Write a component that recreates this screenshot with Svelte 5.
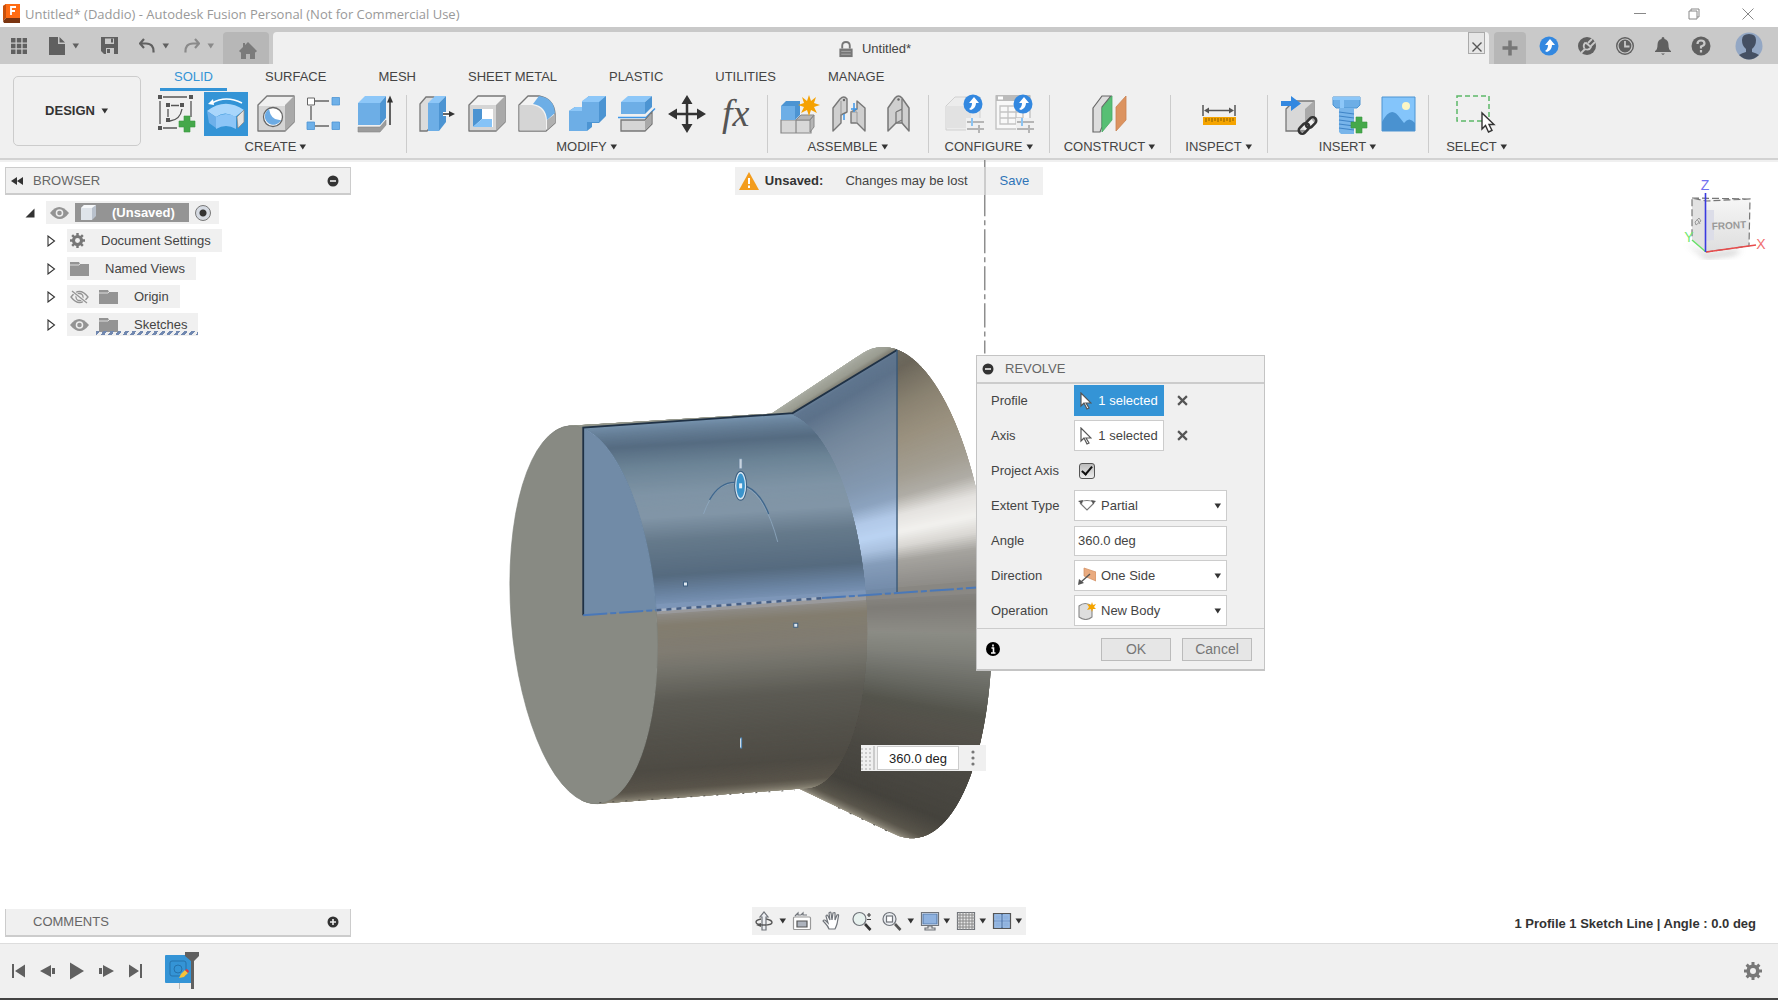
<script>
  const tabs = ['SOLID', 'SURFACE', 'MESH', 'SHEET METAL', 'PLASTIC', 'UTILITIES', 'MANAGE'];
  const groups = [
    { label: 'CREATE', size: 'fit', tools: ['sketch', 'revolve', 'hole', 'pattern', 'extrude'] },
    { label: 'MODIFY', size: 'fit', tools: ['presspull', 'shell', 'fillet', 'combine', 'split', 'move', 'fx'] },
    { label: 'ASSEMBLE', size: 'fit', tools: ['component', 'joint', 'asbuilt'] },
    { label: 'CONFIGURE', size: 'wide', tools: ['configure', 'table'] },
    { label: 'CONSTRUCT', size: 'wide', tools: ['plane'] },
    { label: 'INSPECT', size: 'narrow', tools: ['measure'] },
    { label: 'INSERT', size: 'fit', tools: ['insert', 'fastener', 'canvas'] },
    { label: 'SELECT', size: 'narrow', tools: ['select'] }
  ];
  const tree = [
    { label: 'Document Settings', icons: ['gear'] },
    { label: 'Named Views', icons: ['folder'] },
    { label: 'Origin', icons: ['eyeoff', 'folder'] },
    { label: 'Sketches', icons: ['eye', 'folder'], hatched: true }
  ];
  const navTools = [
    { name: 'orbit', menu: true },
    { name: 'lookat' },
    { name: 'pan' },
    { name: 'zoom' },
    { name: 'fit', menu: true },
    { name: 'display', menu: true },
    { name: 'grid', menu: true },
    { name: 'layout', menu: true }
  ];
  const playback = ['first', 'back', 'play', 'forward', 'last'];

  let angle = $state('360.0 deg');
  let projectAxis = $state(true);

  // Solid of revolution: three tilted rings joined by shaded strips.
  const ring = (cx, cy, rx, ry, tilt) => ({ cx, cy, rx, ry, a: (tilt * Math.PI) / 180 });
  const front = ring(584.5, 615.6, 72.5, 189, -4.3);
  const neck = ring(793.5, 601.5, 72.5, 187.5, -4.3);
  const rim = ring(897.5, 593.5, 93, 245.5, -3.9);

  const cylinderRamp = [
    [-110, 'd0d1c8'], [-92, '9a9c90'], [-79, '8e9289'], [-60, '615d4d'], [-48, '83826d'], [-37, '9d9781'],
    [-29, 'a09983'], [-21, '78715b'], [-10, '615b4a'], [-4, '81827f'], [0, '9c9c9e'], [2, '8c8983'],
    [5, '837d6f'], [13, '807c72'], [18, '76756d'], [29, '5c5b54'], [42, '54524b'], [58, '4e4b44'],
    [72, '5a554b'], [85, '8c8778'], [110, 'b0ab9c']
  ];
  const coneRamp = [
    [-102, 'b0b3aa'], [-85, '9b9d92'], [-78, '6f6b60'], [-70, '6b665a'], [-55, '8a8271'], [-44, '9a917f'],
    [-33, 'a39e92'], [-27, 'b0ada6'], [-22, 'e4e2df'], [-17, 'f2f1ee'], [-13, 'd9d7d3'], [-9, 'a5a39e'],
    [-4, '95938f'], [4, '7e7c77'], [11, '8c8c85'], [17, '7f807a'], [27, '62635c'], [32, '54544c'],
    [38, '54514a'], [50, '4b4943'], [70, '45433d'], [85, '5a564c'], [100, 'a09b8c'], [120, 'a09b8c']
  ];

  function at(r, deg) {
    const t = (deg * Math.PI) / 180;
    const x = r.rx * Math.cos(t);
    const y = r.ry * Math.sin(t);
    return [
      (r.cx + x * Math.cos(r.a) - y * Math.sin(r.a)).toFixed(2),
      (r.cy + x * Math.sin(r.a) + y * Math.cos(r.a)).toFixed(2)
    ].join(',');
  }
  function shade(ramp, deg) {
    let i = 1;
    while (i < ramp.length - 1 && ramp[i][0] < deg) i++;
    const [d0, c0] = ramp[i - 1];
    const [d1, c1] = ramp[i];
    const k = Math.min(1, Math.max(0, (deg - d0) / (d1 - d0)));
    const ch = [0, 2, 4].map((o) => {
      const a = parseInt(c0.slice(o, o + 2), 16);
      const b = parseInt(c1.slice(o, o + 2), 16);
      return Math.round(a + (b - a) * k);
    });
    return `rgb(${ch.join(',')})`;
  }
  // Strips are painted from the silhouettes inward; each one runs on under the
  // next three, so no seam shows between neighbours.
  function strips(from, to, ramp, limit) {
    const out = [];
    const step = 0.5;
    for (let d = limit; d > 0; d -= step) {
      for (const side of [-1, 1]) {
        const steps = [0, 1, 2, 3, 4].map((n) => side * (d - n * step));
        out.push({
          points: [...steps.map((s) => at(from, s)), ...steps.reverse().map((s) => at(to, s))].join(' '),
          color: shade(ramp, side * (d - step / 2))
        });
      }
    }
    return out;
  }
  const surfaces = [...strips(neck, rim, coneRamp, 112), ...strips(front, neck, cylinderRamp, 104)];
</script>

{#snippet caret()}
  <svg class="caret" viewBox="0 0 8 6" width="8" height="6" aria-hidden="true"><path d="M0.5 0.5h6.5L3.8 5.6z" fill="currentColor" /></svg>
{/snippet}

{#snippet upBadge(x, y)}
  <circle cx={x} cy={y} r="9.5" fill="#3388e0" />
  <path d="M{x + 1} {y - 7}l5 6h-3q0 5-5 7l-2-1q3-2 3-6h-3z" fill="#fff" />
{/snippet}

{#snippet sliders(x, y)}
  <path d="M{x} {y}h17M{x} {y + 7}h17M{x + 12} {y + 3}v8" stroke="#b5b5b5" stroke-width="2" fill="none" />
  <path d="M{x + 5} {y - 4}v8" stroke="#8cc4f2" stroke-width="2" />
{/snippet}

{#snippet plus(x, y)}
  <path d="M{x - 8} {y - 3}h5v-5h6v5h5v6h-5v5h-6v-5h-5z" fill="#45a84a" stroke="#3a9940" stroke-width=".6" />
{/snippet}

{#snippet tool(name)}
  <svg viewBox="0 0 44 44" width="44" height="44" aria-hidden="true">
    {#if name === 'sketch'}
      <g stroke="#555" stroke-width="1.3" fill="none">
        <path d="M6 9v23M9 5h24M37 9v16M9 36h14" />
        <path d="M14 17v8M17 13.500h8M28 17q-2 11-12 12" />
      </g>
      <path d="M4 3h4v4H4zM35 3h4v4h-4zM4 34h4v4H4zM12 11h4v4h-4zM26 11h4v4h-4zM12 26h4v4h-4z" fill="#555" />
      {@render plus(33, 32)}
    {:else if name === 'revolve'}
      <path d="M3 19Q21 5 40 18l-9 7Q21 18 12 25z" fill="#a9d6fb" />
      <path d="M3 19l9 6v11L5 31z" fill="#6db0ea" />
      <path d="M12 25q10-6 20 0v12q-10-6-20 0z" fill="#8cc5f7" />
      <path d="M33 25l7-7v12l-6 6z" fill="#e4e2df" stroke="#8b8b8b" stroke-width=".8" />
      <path d="M8 11Q22 3 38 11" fill="none" stroke="#fff" stroke-width="1.500" />
      <path d="M4 12l5-5 1 6z" fill="#fff" />
    {:else if name === 'hole'}
      <path d="M4 13l9-9h27v26l-9 9H4z" fill="#f0f0f0" stroke="#777" stroke-width="1.400" stroke-linejoin="round" />
      <path d="M31 13l9-9v26l-9 9z" fill="#a9a9a9" />
      <path d="M5 14h26v24H5z" fill="#d5d5d5" />
      <circle cx="19" cy="25" r="9.500" fill="#fff" stroke="#666" stroke-width="1.300" />
      <path d="M15 17a8.500 8.500 0 1 0 12 11Q17 29 15 17z" fill="#6cabe4" />
    {:else if name === 'pattern'}
      <path d="M11 9h14M7 14v14M11 34h14" stroke="#666" stroke-width="1.400" />
      <path d="M3.500 6h7v7h-7z" fill="#fff" stroke="#666" />
      <path d="M28 5.500h7.500V13H28zM3 30h7.500v7.500H3zM28 30h7.500v7.500H28z" fill="#6eb0e8" stroke="#4c94d4" stroke-width=".8" />
    {:else if name === 'extrude'}
      <path d="M4 11l7-7h21l-6 7z" fill="#8dc7f8" />
      <path d="M26 11l6-7v22l-6 7z" fill="#4c94d2" />
      <path d="M4 11h22v22H4z" fill="#6daee6" />
      <path d="M4 35h22l6-7v5l-6 7H4z" fill="#9c9c9c" stroke="#888" stroke-width=".6" />
      <path d="M36 33V9" stroke="#333" stroke-width="1.500" />
      <path d="M36 3.500l3 7h-6z" fill="#333" />
    {:else if name === 'presspull'}
      <path d="M5 12l6-7h8v26l-7 8H5z" fill="#dcdcdc" stroke="#777" stroke-width="1.300" />
      <path d="M13 11l7-7h11l-7 7z" fill="#8dc7f8" />
      <path d="M13 11h11v28H13z" fill="#6daee6" />
      <path d="M24 11l7-7v26l-7 9z" fill="#4c94d2" />
      <path d="M28 22h9" stroke="#fff" stroke-width="4" /><path d="M28 22h7" stroke="#333" stroke-width="1.500" /><path d="M34 19l6 3-6 3z" fill="#333" />
    {:else if name === 'shell'}
      <path d="M4 13l9-9h27v26l-9 9H4z" fill="#f3f3f3" stroke="#777" stroke-width="1.400" stroke-linejoin="round" />
      <path d="M31 13l9-9v26l-9 9z" fill="#a9a9a9" /><path d="M5 13h26v25H5z" fill="#d5d5d5" />
      <path d="M8 17h20v18H8z" fill="#fff" /><path d="M8 17h9v10l-9 8z" fill="#4c94d2" /><path d="M17 27h10v8H8z" fill="#85c3f7" />
    {:else if name === 'fillet'}
      <path d="M4 13l9-9h11q15 3 16 18v9l-9 8H4z" fill="#f3f3f3" stroke="#777" stroke-width="1.400" stroke-linejoin="round" />
      <path d="M4.500 13H17q13 2 14 16v9.500H4.500z" fill="#d5d5d5" /><path d="M32 28l8-6v9l-8 7z" fill="#b0b0b0" />
      <path d="M24 4q15 2 16 17l-8 7q-1-14-14-16z" fill="#6daee6" />
    {:else if name === 'combine'}
      <path d="M4 19l6-4h7v-5l7-6h17v20l-7 7h-7v4l-5 4H4z" fill="#4c94d2" />
      <path d="M4 19h13v-9h17v20h-12v9H4z" fill="#6daee6" /><path d="M17 9l7-5h17l-7 6H17zM4 19l6-4h7v4z" fill="#8dc7f8" />
    {:else if name === 'split'}
      <path d="M6 10l7-6h24l-7 6z" fill="#8dc7f8" /><path d="M6 10h24v12H6z" fill="#6daee6" /><path d="M30 10l7-6v11l-7 7z" fill="#4c94d2" />
      <path d="M3 25.500h28l9-9" stroke="#3f97e8" stroke-width="1.500" fill="none" />
      <path d="M6 28h24l7-8v12l-7 7H6z" fill="#d5d5d5" stroke="#777" stroke-width="1.300" /><path d="M30 29l6-7v10l-6 6z" fill="#a9a9a9" />
    {:else if name === 'move'}
      <path d="M22 8v28M8 22h28" stroke="#333" stroke-width="2.500" />
      <path d="M22 3l5.500 9h-11zM22 41l5.500-9h-11zM3 22l9-5.500v11zM41 22l-9-5.500v11z" fill="#333" />
    {:else if name === 'fx'}
      <text x="7" y="34" class="fx">fx</text>
    {:else if name === 'component'}
      <path d="M5 28h15v13H5zM20 28h15v13H20z" fill="#d8d8d8" stroke="#888" stroke-width="1.200" /><path d="M20 28l5-5h13l-4 5zM34 28l4-5v12l-4 5z" fill="#b5b5b5" stroke="#888" />
      <path d="M5 14l5-5h14v14l-5 5H5z" fill="#4c94d2" /><path d="M5 14h14v14H5z" fill="#6daee6" />
      <path d="M33 3l2 6 5-4-2 6 6 2-6 2 3 6-6-3-2 6-2-6-6 3 3-6-6-2 6-2-2-6 5 4z" fill="#f5a100" />
    {:else if name === 'joint'}
      <path d="M7 16l7-9q4-4 7 0v13l-6 3v8l-8 8z" fill="#cfcfcf" stroke="#777" stroke-width="1.400" stroke-linejoin="round" /><path d="M15 23V9" stroke="#999" /><circle cx="18" cy="8" r="1.200" fill="#666" />
      <path d="M18 22v6" stroke="#3f97e8" stroke-width="1.500" />
      <path d="M25 20l6-3V9l8 7v23l-8-8h-6z" fill="#cfcfcf" stroke="#777" stroke-width="1.400" stroke-linejoin="round" /><path d="M25 20h6v11" stroke="#999" fill="none" /><path d="M28 11v9M25 17h6" stroke="#3f97e8" stroke-width="1.500" />
    {:else if name === 'asbuilt'}
      <path d="M12 16l7-10q3.500-4 7 0l7 10v23l-7-8h-6l-8 8z" fill="#cfcfcf" stroke="#777" stroke-width="1.500" stroke-linejoin="round" /><path d="M20 20l6-3V7M20 20v11l6-3M26 17v14" stroke="#777" stroke-width="1.300" fill="none" /><circle cx="22.500" cy="7.500" r="1.200" fill="#666" />
    {:else if name === 'configure'}
      <path d="M4 14l9-9h25v24l-9 9H4z" fill="#ececec" stroke="#d0d0d0" /><path d="M4 14h25v22H4z" fill="#e2e2e2" />
      {@render upBadge(31, 12)}
      <path d="M24 26h19v17H24z" fill="#f0f0f0" />{@render sliders(25, 30)}
    {:else if name === 'table'}
      <path d="M4 4h34v33H4z" fill="#f8f8f8" stroke="#c5c5c5" stroke-width="1.500" /><path d="M4 3h34v6H4z" fill="#bbb" /><path d="M6 4.500h5v3H6z" fill="#fff" />
      <path d="M8 14h23v18H8zM8 20h23M8 26h23M16 14v18M24 14v18" fill="none" stroke="#c3c3c3" stroke-width="1.300" />
      {@render upBadge(31, 12)}
      <path d="M24 26h19v17H24z" fill="#f0f0f0" />{@render sliders(25, 30)}
    {:else if name === 'plane'}
      <path d="M5 16l9-12h9L14 15v20l-2 5H5z" fill="#ddd" stroke="#666" stroke-width="1.200" />
      <path d="M14 16L24 4v24L14 40z" fill="#57bf74" stroke="#48a964" stroke-width=".8" /><path d="M28 15L38 4v24L28 39z" fill="#dc935f" stroke="#c98250" stroke-width=".8" />
    {:else if name === 'measure'}
      <path d="M6 13v11M38 13v11M10 18.500h24" stroke="#555" stroke-width="1.500" /><path d="M7 18.500l5-3v6zM37 18.500l-5-3v6z" fill="#555" />
      <path d="M6 25h33v8H6z" fill="#f5a400" /><path d="M9 26v4M12 26v3M15 26v4M18 26v3M21 26v4M24 26v3M27 26v4M30 26v3M33 26v4M36 26v3" stroke="#8a5f00" />
    {:else if name === 'insert'}
      <path d="M10 17l8-8h20v22l-9 8H10z" fill="#d8d8d8" stroke="#777" stroke-width="1.300" /><path d="M29 17l9-8v22l-9 8z" fill="#a9a9a9" />
      <path d="M5 9h10V4l10 7.500L15 19v-5H5z" fill="#3388e0" />
      <path d="M28 37l9-8" stroke="#f0f0f0" stroke-width="8" />
      <g fill="none" stroke="#333" stroke-width="2.500"><rect x="22" y="33" width="12" height="7" rx="3.500" transform="rotate(-45 28 36.500)" /><rect x="29" y="27" width="12" height="7" rx="3.500" transform="rotate(-45 35 30.500)" /></g>
    {:else if name === 'fastener'}
      <path d="M7 5h27v8l-3 3H10l-3-3z" fill="#6daee6" stroke="#4c94d2" /><path d="M7 5h27v3H7zM14 5h4v11h-4z" fill="#8dc7f8" />
      <path d="M13 16h15v26H15l-2-2z" fill="#78b5ea" /><path d="M13 20l15 2M13 24l15 2M13 28l15 2M13 32l15 2M13 36l15 2" stroke="#3f84c6" stroke-width="1.200" />
      {@render plus(33, 33)}
    {:else if name === 'canvas'}
      <path d="M6 5h33v34H6z" fill="#84c5fb" stroke="#4c94d2" /><path d="M6 30q9-18 18-4l4 5q5-7 11 0v8H6z" fill="#4a92d0" /><circle cx="30" cy="14" r="4" fill="#fbf6c5" />
    {:else if name === 'select'}
      <rect x="2" y="4" width="32" height="25" fill="none" stroke="#5cb868" stroke-width="1.500" stroke-dasharray="5 3" />
      <path d="M27 21v16l3.500-3.500 3 6.500 3.500-1.500-3-6h5z" fill="#fff" stroke="#333" stroke-width="1.400" />
    {/if}
  </svg>
{/snippet}

{#snippet treeIcon(name)}
  {#if name === 'gear'}
    <svg viewBox="0 0 16 16" width="15" height="15" aria-hidden="true"><circle cx="8" cy="8" r="4.200" fill="none" stroke="currentColor" stroke-width="3.400" /><path d="M8 0v16M0 8h16M2.300 2.300l11.400 11.400M13.700 2.300L2.300 13.700" stroke="currentColor" stroke-width="2.600" /><circle cx="8" cy="8" r="2.600" fill="#f0f0f0" /></svg>
  {:else if name === 'folder'}
    <svg viewBox="0 0 19 16" width="19" height="16" aria-hidden="true"><path d="M0 1h9l1 2h9v12H0z" fill="#949494" /><path d="M0 4h9l1-1" stroke="#ddd" fill="none" /></svg>
  {:else}
    <svg viewBox="0 0 19 14" width="19" height="14" aria-hidden="true">
      {#if name === 'eye'}
        <path d="M0 7q9-12 19 0-9 12-19 0z" fill="#949494" /><circle cx="9.500" cy="7" r="3.800" fill="#eee" /><circle cx="9.500" cy="7" r="2.300" fill="#949494" />
      {:else}
        <path d="M1 7q8.500-11 17 0-8.500 11-17 0z" fill="none" stroke="#949494" stroke-width="1.300" /><circle cx="9.500" cy="7" r="3.500" fill="none" stroke="#949494" stroke-width="1.300" /><path d="M2 1l15 12" stroke="#f0f0f0" stroke-width="3" /><path d="M2 1l15 12" stroke="#949494" stroke-width="1.300" />
      {/if}
    </svg>
  {/if}
{/snippet}

{#snippet nav(name)}
  <svg viewBox="0 0 20 20" width="20" height="20" aria-hidden="true">
    <g fill="none" stroke="#70747a" stroke-width="1.200">
      {#if name === 'orbit'}
        <path d="M12 8q6 1 6 3.500 0 2.500-8 2.500T2 11q0-2 5-3" stroke="#555" stroke-width="1.400" /><path d="M8 19V6H6l4-5 4 5h-2v13z" fill="#eceef2" /><path d="M8 14h4" stroke="#555" stroke-width="1.400" /><path d="M2 14l5 2V12z" fill="#555" stroke="none" />
      {:else if name === 'lookat'}
        <rect x="1.500" y="6" width="17" height="12.500" rx="1" fill="#fff" stroke="#999" /><path d="M5 10h10v6H5z" fill="#adb3bd" stroke="#555" /><path d="M3 5l3-3v2h3l2-2v2h4" />
      {:else if name === 'pan'}
        <path d="M7 18q-1-3-4-6l-2-2q1-2 3 0l2 2-2-7q1-2 2 0l2 4-1-7q2-2 2 0l1 7 1-7q2-1 2 0v7l2-5q2-1 1.500 1L15 13q-1 3-2 5z" fill="#fff" />
      {:else if name === 'zoom'}
        <circle cx="7.500" cy="8" r="6.500" fill="#e7f1ee" /><path d="M13 13l5.500 6" stroke="#333" stroke-width="2.600" /><path d="M15 4h4M17 2v4M15 8.500h4" stroke="#444" />
      {:else if name === 'fit'}
        <circle cx="7.500" cy="8" r="6.500" fill="#e9ecf0" /><rect x="4.500" y="5" width="6" height="6" fill="#fff" /><path d="M13 13l5.500 6" stroke="#555" stroke-width="2.600" />
      {:else if name === 'display'}
        <path d="M1.500 1.500h17v13h-17z" fill="#fff" /><path d="M3 3h14v10H3z" fill="#8fb2df" stroke="#5c80b0" /><path d="M8 15h4v2h3v2H5v-2h3z" fill="#ddd" />
      {:else if name === 'grid'}
        <path d="M1.500 1.500h17v17h-17z" fill="#e8e8e8" /><path d="M4 1v18M7 1v18M10 1v18M13 1v18M16 1v18M1 4h18M1 7h18M1 10h18M1 13h18M1 16h18" stroke="#888" stroke-width="1" />
      {:else}
        <path d="M1.500 2.500h17v15h-17z" fill="#8fb2df" stroke="#555" /><path d="M10 3v14" stroke="#4d6fa0" stroke-width="1.500" /><path d="M2 10h16" stroke="#6f93c6" /><path d="M3 4h6v5H3zM11 4h6v5h-6zM3 11h6v5H3zM11 11h6v5h-6z" stroke="#a6c2e6" stroke-width=".6" />
      {/if}
    </g>
  </svg>
{/snippet}

{#snippet cursor()}
  <svg viewBox="0 0 12 18" width="12" height="18" aria-hidden="true"><path d="M1 1v13l3-3 3 6 2-1-3-5h5z" fill="#fff" stroke="#555" stroke-width="1.200" /></svg>
{/snippet}

{#snippet disc(kind)}
  <svg viewBox="0 0 12 12" width="12" height="12" aria-hidden="true"><circle cx="6" cy="6" r="5.500" fill="#333" /><path d={kind === 'plus' ? 'M3 6h6M6 3v6' : 'M3 6h6'} stroke="#eee" stroke-width="1.600" /></svg>
{/snippet}

<div class="app">
  <header class="titlebar">
    <svg class="logo" viewBox="0 0 17 19" width="17" height="19" aria-hidden="true"><path d="M0 2l3-2h14v14H3z" fill="#ff6b12" /><path d="M0 2l3-2v14l-3 3z" fill="#c8500b" /><path d="M0 17l3-3h14v5H1z" fill="#7a3410" /><path d="M8 11V3h5M8 7h4" stroke="#fff" stroke-width="1.800" fill="none" /></svg>
    <h1>Untitled* (Daddio) - Autodesk Fusion Personal (Not for Commercial Use)</h1>
    <div class="window-buttons">
      <button aria-label="Minimize"><svg viewBox="0 0 12 12" width="12" height="12"><path d="M0 5.500h12" stroke="#888" /></svg></button>
      <button aria-label="Restore"><svg viewBox="0 0 12 12" width="12" height="12"><path d="M1 3h8v8H1zM3 3V1h8v8H9" fill="none" stroke="#888" /></svg></button>
      <button aria-label="Close"><svg viewBox="0 0 12 12" width="12" height="12"><path d="M0.500 0.500l11 11M11.500 0.500l-11 11" stroke="#888" /></svg></button>
    </div>
  </header>

  <div class="quickbar">
    <div class="quick">
      <button aria-label="Data panel"><svg viewBox="0 0 18 18" width="18" height="18"><path d="M1 1h4.500v4.500H1zM6.800 1h4.500v4.500H6.800zM12.600 1H17v4.500h-4.400zM1 6.800h4.500v4.500H1zM6.800 6.800h4.500v4.500H6.800zM12.600 6.800H17v4.500h-4.400zM1 12.600h4.500V17H1zM6.800 12.600h4.500V17H6.800zM12.600 12.600H17V17h-4.400z" fill="currentColor" /></svg></button>
      <button aria-label="File"><svg viewBox="0 0 16 18" width="16" height="18"><path d="M0 0h9v7h7v11H0zM10.500 0L16 5.500h-5.500z" fill="currentColor" /></svg>{@render caret()}</button>
      <button aria-label="Save file"><svg viewBox="0 0 17 17" width="17" height="17"><path d="M0 0h17v17H3l-3-3z" fill="currentColor" /><path d="M4 1.500h9V7H4zM5 11h8v6H5z" fill="#c9c9c9" /><path d="M10 1.500h2v4h-2zM6 12h3v4H6z" fill="currentColor" /></svg></button>
      <button aria-label="Undo"><svg viewBox="0 0 16 16" width="16" height="16"><path d="M5 1L1 5.500 5 10M1 5.500h6q8 0 7.500 9" fill="none" stroke="currentColor" stroke-width="2.200" /></svg>{@render caret()}</button>
      <button aria-label="Redo" class="dim"><svg viewBox="0 0 16 16" width="16" height="16"><path d="M11 1l4 4.500L11 10M15 5.500H9Q1 5.500 1.500 14.500" fill="none" stroke="currentColor" stroke-width="2.200" /></svg>{@render caret()}</button>
    </div>
    <button class="home" aria-label="Home"><svg viewBox="0 0 18 18" width="18" height="18"><path d="M9 1l9 9-1.500 1.500L16 11v7h-5v-5H7v5H2v-7l-.5.500L0 10l4-4V2h2v2z" fill="#7b7b7b" /></svg></button>
    <div class="doc-tab">
      <div class="doc-title">
        <svg viewBox="0 0 16 18" width="16" height="17" aria-hidden="true"><path d="M4 8V5q0-4 4-4t4 4v3" fill="none" stroke="#777" stroke-width="2" /><path d="M1 8h14v9H1z" fill="#777" /><path d="M3 11h10M3 14h10" stroke="#aaa" /></svg>
        <span>Untitled*</span>
      </div>
      <button class="close-tab" aria-label="Close tab"><svg viewBox="0 0 12 12" width="12" height="12"><path d="M1.500 1.500l9 9M10.500 1.500l-9 9" stroke="#555" stroke-width="1.400" /></svg></button>
    </div>
    <button class="new-tab" aria-label="New tab"><svg viewBox="0 0 16 16" width="16" height="16"><path d="M8 0.500v15M0.500 8h15" stroke="#777" stroke-width="3.500" /></svg></button>
    <div class="account">
      <button aria-label="Updates"><svg viewBox="0 0 20 20" width="20" height="20">{@render upBadge(10, 10)}</svg></button>
      <button aria-label="Extensions"><svg viewBox="0 0 20 20" width="20" height="20"><circle cx="10" cy="10" r="9" fill="currentColor" /><path d="M4 17l4-4M7.500 12.500q-2-3 1-6M8 13q4 2 6-2M8.500 6.500l6 5M11 7l4-4M14 10l4-4" stroke="#c9c9c9" stroke-width="1.800" fill="none" /></svg></button>
      <button aria-label="Job status"><svg viewBox="0 0 20 20" width="20" height="20"><circle cx="10" cy="10" r="9" fill="currentColor" /><circle cx="10" cy="10" r="7" fill="none" stroke="#c9c9c9" stroke-width="1.200" /><path d="M10 5v5.500h4.500" fill="none" stroke="#c9c9c9" stroke-width="1.800" /></svg></button>
      <button aria-label="Notifications"><svg viewBox="0 0 20 20" width="20" height="20"><path d="M10 1q1.500 0 1.500 2 4 1 4 6 0 5 2.500 6v1H2v-1q2.500-1 2.500-6 0-5 4-6 0-2 1.500-2zM8 17.500h4L10 19z" fill="currentColor" /></svg></button>
      <button aria-label="Help"><svg viewBox="0 0 20 20" width="20" height="20"><circle cx="10" cy="10" r="9.500" fill="currentColor" /><path d="M6.500 8q0-3.500 3.500-3.500T13.500 7.500q0 2-3.500 3v2M10 14v2.500" fill="none" stroke="#c9c9c9" stroke-width="2.200" /></svg></button>
      <button class="avatar" aria-label="Profile menu"><svg viewBox="0 0 28 28" width="28" height="28"><circle cx="14" cy="14" r="13.500" fill="#93a7c4" /><path d="M4 23q3-2 7-3v-3q-4-3-4-9 0-6 7-6t7 6q0 6-4 9v3q4 1 7 3-10 9-20 0z" fill="#455063" /></svg></button>
    </div>
  </div>

  <div class="ribbon">
    <button class="workspace">DESIGN {@render caret()}</button>
    <div class="ribbon-main">
      <nav class="tabs" aria-label="Workspace tabs">
        {#each tabs as tab, i}
          <button class="tab" class:active={i === 0}>{tab}</button>
        {/each}
      </nav>
      <div class="groups">
        {#each groups as group, i}
          <section class="group {group.size}">
            <div class="tools">
              {#each group.tools as name}
                <button class="tool" class:chosen={name === 'revolve'} aria-label={name}>{@render tool(name)}</button>
              {/each}
            </div>
            <button class="group-label">{group.label} {@render caret()}</button>
          </section>
          {#if i < groups.length - 1}<span class="divider"></span>{/if}
        {/each}
      </div>
    </div>
  </div>

  <main class="viewport">
    <svg class="scene" viewBox="0 162 1778 781" preserveAspectRatio="xMidYMid slice" aria-label="Model preview" role="img">
      <path d="M984.500 162v193" stroke="#8e8e8e" stroke-width="1.500" stroke-dasharray="24 4 5 4" stroke-dashoffset="5" />
      {#each surfaces as s}
        <polygon points={s.points} fill={s.color} />
      {/each}
      <ellipse cx={front.cx} cy={front.cy} rx={front.rx} ry={front.ry} transform="rotate(-4.3 {front.cx} {front.cy})" fill="#888a83" stroke="#7d7f79" stroke-width=".6" />
      <path d="M584 429L793 414.500 897 351.500V594L584 616z" fill="#3c8dfc" fill-opacity=".3" />
      <path d="M584 616V429L793 414.500 897 351.500" fill="none" stroke="#1f3145" stroke-width="1.800" />
      <path d="M897 351.500V594" stroke="#3a5877" stroke-width="1.400" />
      <path d="M584 616L657 611M822 599L984 588" stroke="#4a78b8" stroke-width="2" stroke-dasharray="24 3 6 3" />
      <path d="M657 611L822 599" stroke="#a8b4c6" stroke-width="2.500" /><path d="M657 611L822 599" stroke="#465f86" stroke-width="2.500" stroke-dasharray="5 5" />
      <path d="M600 803L795 790.500M838 808L893 834" stroke="#55534c" stroke-width="1" stroke-dasharray="2 11" />
      <path d="M704 515Q715 484 735 484.500M747 489Q766 498 778 543" fill="none" stroke="#8fa9c1" stroke-width=".8" />
      <path d="M710 501Q720 483.500 735 483.500M747 487.500Q761 494 769 515" fill="none" stroke="#3f678d" stroke-width="1.300" />
      <path d="M739.500 460h3v10h-3z" fill="#c8d3de" stroke="#62809e" stroke-width=".6" />
      <ellipse cx="741" cy="487" rx="5" ry="13" fill="#3a94cc" stroke="#d7e6f2" stroke-width="1.500" /><ellipse cx="741" cy="487" rx="6" ry="14.500" fill="none" stroke="#3c5f80" />
      <path d="M739.500 484.500h3v5h-3z" fill="#e8f2fa" />
      <path d="M684 583h4v4h-4zM794 624h4v4h-4z" fill="#dfe8f0" stroke="#3c5f80" />
      <path d="M741.500 738v11" stroke="#4f86b5" stroke-width="2" /><path d="M741 739v9" stroke="#dfe8f0" />
    </svg>

    <div class="top-row">
      <aside class="browser">
        <header class="panel-head">
          <svg viewBox="0 0 12 8" width="12" height="8" aria-hidden="true"><path d="M6 0v8L0 4zM12 0v8L6 4z" fill="#333" /></svg>
          <h2>BROWSER</h2>
          <button aria-label="Collapse browser">{@render disc('minus')}</button>
        </header>
        <ul class="tree">
          <li class="root">
            <button class="twist" aria-label="Collapse document"><svg viewBox="0 0 10 10" width="10" height="10"><path d="M9.500 0.500v9H0.500z" fill="#333" /></svg></button>
            <div class="chip">
              {@render treeIcon('eye')}
              <span class="doc-name"><svg viewBox="0 0 17 17" width="17" height="17" aria-hidden="true"><path d="M1 4l3-3h12v11l-4 4H1z" fill="#b9c1cc" /><path d="M1 4l3-3h12l-4 3z" fill="#f6f8fa" /><path d="M1 4h11v12H1z" fill="#dfe4ea" /></svg><b>(Unsaved)</b></span>
              <input type="radio" checked aria-label="Activate document" />
            </div>
          </li>
          {#each tree as item}
            <li>
              <button class="twist" aria-label="Expand {item.label}"><svg viewBox="0 0 9 12" width="9" height="12"><path d="M1 1v10l6.500-5z" fill="#fff" stroke="#333" stroke-width="1.100" /></svg></button>
              <div class="chip" class:hatched={item.hatched}>
                {#each item.icons as icon}{@render treeIcon(icon)}{/each}
                <span class="node">{item.label}</span>
              </div>
            </li>
          {/each}
        </ul>
      </aside>

      <div class="notice" role="status">
        <svg viewBox="0 0 20 18" width="20" height="18" aria-hidden="true"><path d="M10 0l10 18H0z" fill="#f39c1c" /><path d="M10 6v6M10 13.500v2.500" stroke="#fff" stroke-width="2" /></svg>
        <b>Unsaved:</b>
        <span>Changes may be lost</span>
        <a href="#save">Save</a>
      </div>

      <svg class="viewcube" viewBox="1680 172 92 92" width="92" height="92" role="img" aria-label="View cube">
        <defs><filter id="soft"><feGaussianBlur stdDeviation="3" /></filter>
          <linearGradient id="face" x1="0" y1="0" x2="0" y2="1"><stop offset="0" stop-color="#f6f6f6" /><stop offset="1" stop-color="#dedede" /></linearGradient></defs>
        <path d="M1686 243l20 12 36-5-8 4-28 4z" fill="#777" opacity=".6" filter="url(#soft)" />
        <path d="M1692 198.500l58 .5-1 47-43 6-14-12z" fill="url(#face)" />
        <path d="M1692 198.500l14 3v50l-14-12z" fill="#e2e2e2" />
        <path d="M1706 210h8v30l-8 1z" fill="#dcdde8" />
        <path d="M1706 252l43-6 1-47-44 2-14-3v41M1692 198l58 1" fill="none" stroke="#777" stroke-width="1.200" stroke-dasharray="7 3" />
        <text x="1729" y="229" class="cube-face" transform="rotate(-3 1728 225)">FRONT</text>
        <path d="M1697 219l3 5M1695 222l4-4 2 3-5 4z" stroke="#999" fill="none" />
        <path d="M1706 252l-14-12" stroke="#66e066" stroke-width="1.500" /><path d="M1706 252l50-7" stroke="#e84b4b" stroke-width="1.500" /><path d="M1705.500 252v-59" stroke="#3a3ae0" stroke-width="1.600" />
        <text x="1705" y="190" class="axis z">Z</text><text x="1689" y="242" class="axis y">Y</text><text x="1761" y="249" class="axis x">X</text>
      </svg>
    </div>

    <form class="dialog" aria-label="Revolve" onsubmit={(e) => e.preventDefault()}>
      <header>{@render disc('minus')}<h2>REVOLVE</h2></header>
      <div class="fields">
        <span class="label">Profile</span>
        <div class="field"><button type="button" class="pick on">{@render cursor()}1 selected</button><button type="button" class="clear" aria-label="Clear profile"><svg viewBox="0 0 10 10" width="11" height="11"><path d="M1 1l8 8M9 1L1 9" stroke="#555" stroke-width="2" /></svg></button></div>
        <span class="label">Axis</span>
        <div class="field"><button type="button" class="pick">{@render cursor()}1 selected</button><button type="button" class="clear" aria-label="Clear axis"><svg viewBox="0 0 10 10" width="11" height="11"><path d="M1 1l8 8M9 1L1 9" stroke="#555" stroke-width="2" /></svg></button></div>
        <label class="label" for="project">Project Axis</label>
        <div class="field"><input id="project" class="check" type="checkbox" bind:checked={projectAxis} /></div>
        <label class="label" for="extent">Extent Type</label>
        <div class="field drop"><svg viewBox="0 0 18 18" width="18" height="18" aria-hidden="true"><path d="M2 6l7 7 7-7M2 5q7-3 14 0" fill="none" stroke="#777" stroke-width="1.100" /><path d="M0 4l5-1-1 4zM18 4l-5-1 2 4z" fill="#555" /></svg><select id="extent"><option>Partial</option></select>{@render caret()}</div>
        <label class="label" for="angle">Angle</label>
        <div class="field"><input id="angle" class="text" bind:value={angle} /></div>
        <label class="label" for="direction">Direction</label>
        <div class="field drop"><svg viewBox="0 0 18 18" width="18" height="18" aria-hidden="true"><path d="M6 1l12 4v9L6 9z" fill="#e9ab80" stroke="#d18e60" stroke-width=".7" /><path d="M12 7l-9 8" stroke="#555" stroke-width="1.400" /><path d="M0 18l1-6 5 4z" fill="#555" /></svg><select id="direction"><option>One Side</option></select>{@render caret()}</div>
        <label class="label" for="operation">Operation</label>
        <div class="field drop"><svg viewBox="0 0 18 18" width="18" height="18" aria-hidden="true"><path d="M1 4q6-5 13 0v11q-6 5-13 0z" fill="#dedede" stroke="#888" stroke-width="1.100" /><path d="M14 0l1 3 3-1-2 3 2 2-3 0-1 3-1-3-4 1 2-3-2-3 4 1z" fill="#f5a400" /></svg><select id="operation"><option>New Body</option></select>{@render caret()}</div>
      </div>
      <footer>
        <svg viewBox="0 0 14 14" width="14" height="14" aria-label="Information" role="img"><circle cx="7" cy="7" r="7" fill="#000" /><path d="M7 2.500v2M5.500 6H7.500v5M5 11h4.500" stroke="#fff" stroke-width="1.600" fill="none" /></svg>
        <button type="submit">OK</button><button type="button">Cancel</button>
      </footer>
    </form>

    <div class="float-input">
      <span class="grip"></span>
      <input aria-label="Revolve angle" bind:value={angle} />
      <button aria-label="More options"><svg viewBox="0 0 4 16" width="4" height="16"><circle cx="2" cy="2" r="1.600" fill="#777" /><circle cx="2" cy="8" r="1.600" fill="#777" /><circle cx="2" cy="14" r="1.600" fill="#777" /></svg></button>
    </div>

    <div class="bottom-row">
      <header class="panel-head comments"><h2>COMMENTS</h2><button aria-label="Expand comments">{@render disc('plus')}</button></header>
      <div class="navbar">
        {#each navTools as t}
          <button class:menu={t.menu} aria-label={t.name}>{@render nav(t.name)}{#if t.menu}{@render caret()}{/if}</button>
        {/each}
      </div>
      <p class="status">1 Profile 1 Sketch Line | Angle : 0.0 deg</p>
    </div>
  </main>

  <footer class="timeline">
    {#each playback as step}
      <button aria-label={step}>
        <svg viewBox="0 0 16 18" width="16" height="18">
          <g fill="#606060">
            {#if step === 'first'}<path d="M1 2h2v14H1zM14 2.500v13L4 9z" />
            {:else if step === 'back'}<path d="M11 3v12L0 9zM12 6h3v6h-3z" />
            {:else if step === 'play'}<path d="M1 0.500v17L15 9z" />
            {:else if step === 'forward'}<path d="M5 3v12l11-6zM1 6h3v6H1z" />
            {:else}<path d="M13 2h2v14h-2zM2 2.500v13L12 9z" />{/if}
          </g>
        </svg>
      </button>
    {/each}
    <button class="feature" aria-label="Sketch1">
      <svg viewBox="0 0 36 38" width="36" height="38"><path d="M15.500 28v9" stroke="#bbb" /><rect x="1" y="3" width="27" height="28" rx="1" fill="#3494d6" /><rect x="6" y="9" width="16" height="15" rx="2" fill="none" stroke="#2572ac" /><circle cx="14" cy="17" r="4" fill="none" stroke="#2572ac" /><path d="M15 26l2-4 4-4 3 3-4 4z" fill="#f6c23c" /><path d="M21 18l2-1 2 2-1 2z" fill="#e0393e" /><path d="M21 0h14v4l-5 5v28h-3V9l-6-5z" fill="#606060" /></svg>
    </button>
    <button class="settings" aria-label="Timeline settings"><svg viewBox="0 0 18 18" width="18" height="18"><circle cx="9" cy="9" r="4.800" fill="none" stroke="#787878" stroke-width="3.600" /><path d="M9 0v18M0 9h18M2.600 2.600l12.800 12.800M15.400 2.600L2.600 15.400" stroke="#787878" stroke-width="3" /><circle cx="9" cy="9" r="3" fill="#f0f0f0" /></svg></button>
  </footer>
</div>

<style>
  :global(body) { margin: 0; }
  .app { min-height: 100vh; display: flex; flex-direction: column; background: #fff; color: #444; font: 13px/16px "Liberation Sans", Arial, sans-serif; }
  .app :global(svg) { display: block; flex: none; }
  button, input, select { font: inherit; color: inherit; margin: 0; box-sizing: border-box; }
  button { display: flex; align-items: center; justify-content: center; padding: 0; border: 0; background: none; }
  h1, h2, p, ul { margin: 0; padding: 0; font: inherit; list-style: none; }
  .caret { color: #333; }

  .titlebar { display: flex; align-items: center; gap: 5px; height: 27px; padding-left: 3px; }
  .titlebar h1 { flex: 1; font: 13px/18px "Open Sans", "Noto Sans", sans-serif; color: #999; }
  .window-buttons { display: flex; padding-right: 3px; }
  .window-buttons button { width: 54px; height: 26px; }

  .quickbar { display: flex; height: 37px; background: #c9c9c9; color: #606060; }
  .quick { display: flex; align-items: center; gap: 21px; box-sizing: border-box; width: 223px; padding: 0 8px 0 10px; }
  .quick button { gap: 7px; }
  .quick .caret { color: #606060; }
  .quick .dim { margin-left: -7px; }
  .quick .dim, .quick .dim .caret { color: #8a8a8a; }
  .home, .new-tab { margin-top: 5px; background: #b7b7b7; border-radius: 4px 4px 0 0; }
  .home { width: 46px; margin-right: 4px; padding: 4px 0 0 3px; }
  .new-tab { width: 32px; }
  .doc-tab { flex: 1; display: flex; margin: 5px 5px 0 0; padding-left: 8px; background: #f0f0f0; border-radius: 4px 4px 0 0; color: #444; }
  .doc-title { flex: 1; display: flex; align-items: center; justify-content: center; gap: 8px; padding-top: 2px; }
  .close-tab { width: 17px; height: 22px; margin-right: 4px; padding-top: 8px; border: 1px solid #aaa; background: #e6e6e6; }
  .account { display: flex; align-items: center; padding: 0 15px 0 4px; }
  .account button { width: 38px; height: 28px; }
  .account .avatar { width: 28px; margin-left: 15px; }

  .ribbon { display: flex; gap: 5px; padding: 0 0 1px 13px; background: #f0f0f0; border-bottom: 2px solid #d2d2d2; box-shadow: 0 2px 0 #f0f0f0; position: relative; }
  .workspace { width: 128px; height: 70px; margin-top: 12px; gap: 6px; border: 1px solid #ccc; border-radius: 5px; font-weight: bold; color: #333; }
  .tabs { display: flex; gap: 24px; height: 28px; padding-left: 14px; }
  .tab { height: 27px; padding: 2px 14px 0; border-bottom: 3px solid transparent; }
  .tab.active { color: #3494d6; border-bottom-color: #3494d6; }
  .groups { display: flex; align-items: flex-start; }
  .group { display: flex; flex-direction: column; align-items: center; }
  .fit { padding: 0 8px; }
  .wide { width: 120px; }
  .narrow { width: 96px; }
  .tools { display: flex; gap: 6px; }
  .tool { width: 44px; height: 44px; }
  .chosen { background: #3494d6; }
  .group-label { gap: 3px; height: 21px; }
  .divider { width: 1px; height: 58px; margin-top: 3px; background: #ccc; }
  .fx { font: italic 38px "Liberation Serif", serif; fill: #555; }

  .viewport { position: relative; flex: 1; display: flex; flex-direction: column; justify-content: space-between; padding: 7px 0 6px; }
  .scene { position: absolute; inset: 0; width: 100%; height: 100%; }
  .top-row, .bottom-row { position: relative; display: grid; grid-template-columns: 1fr auto 1fr; align-items: start; }
  .browser { width: 346px; margin-left: 5px; }
  .panel-head { display: flex; align-items: center; box-sizing: border-box; width: 346px; height: 28px; padding: 0 11px 0 5px; background: #f0f0f0; border: 1px solid #ccc; border-bottom-width: 2px; color: #666; }
  .panel-head h2 { flex: 1; padding-left: 10px; }
  .comments { margin-left: 5px; border-top: 0; }
  .comments h2 { padding-left: 22px; }
  .tree { display: grid; gap: 5px; padding-top: 6px; }
  .tree li { display: flex; padding-left: 38px; }
  .tree .root { padding-left: 17px; }
  .twist { width: 16px; margin-right: 8px; }
  .chip { display: flex; align-items: center; gap: 10px; height: 23px; padding: 0 11px 0 3px; background: #f0f0f0; color: #444; }
  .chip > :global(svg) { color: #777; }
  .node { padding-left: 6px; }
  .root .chip { gap: 6px; padding: 0 8px 0 4px; }
  .doc-name { display: flex; align-items: center; gap: 15px; height: 19px; padding: 0 14px 0 5px; background: #949494; color: #fff; }
  .root input { appearance: none; width: 16px; height: 16px; border: 1px solid #777; border-radius: 50%; background: radial-gradient(circle, #333 0 3px, #d5dae2 4px); }
  .hatched { position: relative; }
  .hatched::after { content: ""; position: absolute; left: 29px; right: 0; bottom: 1px; height: 4px; background: repeating-linear-gradient(125deg, #7188b0 0 3px, transparent 3px 6px); }

  .notice { display: flex; align-items: center; height: 28px; background: #f0f0f0; }
  .notice svg { margin: 0 6px 0 4px; }
  .notice b { color: #333; }
  .notice span { padding: 0 16px 0 22px; line-height: 28px; border-right: 2px solid #ccc; }
  .notice a { padding: 0 14px; color: #2f74b8; text-decoration: none; }
  .viewcube { justify-self: end; margin: 5px 6px 0 0; }
  .cube-face { font: bold 10px "Liberation Sans", sans-serif; fill: #999; text-anchor: middle; }
  .axis { font: 14px "Liberation Sans", sans-serif; text-anchor: middle; }
  .z { fill: #7070f0; }
  .y { fill: #70e870; }
  .x { fill: #f07070; }

  .dialog { position: absolute; top: 195px; right: 513px; width: 287px; border: 1px solid #c4c4c4; border-bottom-width: 2px; background: #f0f0f0; }
  .dialog header { display: flex; align-items: center; gap: 11px; height: 26px; padding-left: 5px; border-bottom: 2px solid #ccc; color: #666; }
  .fields { display: grid; grid-template-columns: 83px 1fr; grid-auto-rows: 31px; row-gap: 4px; align-items: center; padding: 1px 0 2px 14px; }
  .field { display: flex; align-items: center; height: 31px; }
  .pick { gap: 6px; width: 90px; height: 31px; border: 1px solid #ccc; background: #fff; }
  .pick.on { border-color: #3494d6; background: #3494d6; color: #fff; }
  .clear { width: 37px; height: 31px; }
  .check { appearance: none; width: 16px; height: 16px; margin-left: 5px; border: 1px solid #555; border-radius: 3px; background: linear-gradient(#bbb, #eee); display: grid; place-items: center; }
  .check:checked::after { content: ""; width: 4px; height: 9px; margin-bottom: 3px; border: solid #111; border-width: 0 2px 2px 0; transform: rotate(40deg); }
  .drop { position: relative; width: 153px; }
  .drop select { appearance: none; width: 153px; height: 31px; padding: 0 0 0 26px; border: 1px solid #ccc; border-radius: 0; background: #fff; }
  .drop > svg { position: absolute; left: 4px; pointer-events: none; }
  .drop > .caret { left: auto; right: 5px; }
  .text { width: 153px; height: 30px; padding: 0 3px; border: 1px solid #ccc; border-radius: 0; background: #fff; }
  .dialog footer { display: flex; align-items: center; gap: 11px; height: 40px; padding: 0 12px 0 9px; border-top: 1px solid #ccc; }
  .dialog footer svg { margin-right: auto; }
  .dialog footer button { width: 70px; height: 23px; border: 1px solid #bbb; background: #e6e6e6; color: #777; font-size: 14px; }

  .float-input { position: absolute; top: 585px; right: 792px; display: flex; align-items: center; width: 125px; height: 26px; background: #f0f0f0; }
  .grip { width: 12px; height: 24px; margin-right: 2px; border-right: 2px solid #ccc; background: radial-gradient(circle at 1px 1px, #ccc 1px, transparent 1px) 4px 2px / 4px 4px #f0f0f0; }
  .float-input input { width: 82px; height: 24px; padding: 0; border: 1px solid #ccc; text-align: center; background: #fff; color: #222; }
  .float-input button { flex: 1; height: 24px; }

  .bottom-row { align-items: end; }
  .navbar { display: flex; align-items: center; gap: 10px; height: 28px; padding: 0 8px 0 2px; margin-bottom: 2px; background: #f0f0f0; }
  .navbar button { gap: 5px; }
  .navbar .menu { margin-right: -5px; }
  .navbar button:nth-child(n + 6) { gap: 3px; }
  .status { justify-self: end; padding: 0 22px 5px 0; font-weight: bold; color: #333; }

  .timeline { display: flex; align-items: center; gap: 13px; height: 54px; padding: 0 16px 0 11px; background: #f0f0f0; border-top: 1px solid #ddd; border-bottom: 2px solid #444; }
  .feature { margin-left: 8px; }
  .settings { margin-left: auto; }
</style>
